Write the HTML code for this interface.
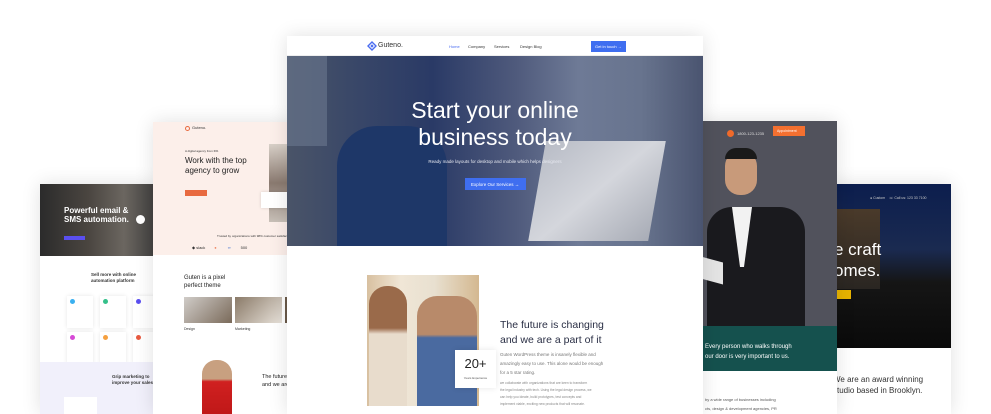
<!DOCTYPE html>
<html><head><meta charset="utf-8"><style>
*{margin:0;padding:0;box-sizing:border-box}
body{width:991px;height:414px;overflow:hidden;background:#fff;font-family:"Liberation Sans",sans-serif;position:relative}
.a{position:absolute}
.sh{box-shadow:0 0 18px rgba(0,0,0,.12)}
.t{position:absolute;white-space:nowrap}
</style></head><body>

<!-- far left card -->
<div class="a sh" style="left:40px;top:184px;width:120px;height:230px;background:#fff;overflow:hidden">
 <div class="a" style="left:0;top:0;width:120px;height:72px;background:linear-gradient(90deg,#2b2b2b,#4a4540 40%,#6b6660 70%,#3a3a3a)"></div>
 <div class="t" style="left:24px;top:22px;color:#fff;font-size:8px;font-weight:bold;line-height:9px">Powerful email &amp;<br>SMS automation.</div>
 <div class="a" style="left:24px;top:52px;width:21px;height:4px;background:#5a4ff0"></div>
 <div class="a" style="left:96px;top:31px;width:9px;height:9px;border-radius:50%;background:#fff"></div>
 <div class="t" style="left:51px;top:88px;color:#333;font-size:4.5px;font-weight:bold;line-height:6px">Sell more with online<br>automation platform</div>
 <div class="a" style="left:27px;top:112px;width:26px;height:32px;background:#fff;box-shadow:0 0 4px rgba(0,0,0,.1)"><div class="a" style="left:3px;top:3px;width:5px;height:5px;border-radius:50%;background:#3ab0f0"></div></div>
 <div class="a" style="left:60px;top:112px;width:26px;height:32px;background:#fff;box-shadow:0 0 4px rgba(0,0,0,.1)"><div class="a" style="left:3px;top:3px;width:5px;height:5px;border-radius:50%;background:#34c08a"></div></div>
 <div class="a" style="left:93px;top:112px;width:26px;height:32px;background:#fff;box-shadow:0 0 4px rgba(0,0,0,.1)"><div class="a" style="left:3px;top:3px;width:5px;height:5px;border-radius:50%;background:#5a4ff0"></div></div>
 <div class="a" style="left:27px;top:148px;width:26px;height:32px;background:#fff;box-shadow:0 0 4px rgba(0,0,0,.1)"><div class="a" style="left:3px;top:3px;width:5px;height:5px;border-radius:50%;background:#d64ad6"></div></div>
 <div class="a" style="left:60px;top:148px;width:26px;height:32px;background:#fff;box-shadow:0 0 4px rgba(0,0,0,.1)"><div class="a" style="left:3px;top:3px;width:5px;height:5px;border-radius:50%;background:#f5a040"></div></div>
 <div class="a" style="left:93px;top:148px;width:26px;height:32px;background:#fff;box-shadow:0 0 4px rgba(0,0,0,.1)"><div class="a" style="left:3px;top:3px;width:5px;height:5px;border-radius:50%;background:#e85a40"></div></div>
 <div class="a" style="left:0;top:178px;width:120px;height:52px;background:#f1f0fb"></div>
 <div class="t" style="left:72px;top:190px;color:#333;font-size:4.5px;font-weight:bold;line-height:6px">Grip marketing to<br>improve your sales.</div>
 <div class="a" style="left:24px;top:213px;width:33px;height:20px;background:#fff"></div>
</div>

<!-- second card -->
<div class="a sh" style="left:153px;top:122px;width:140px;height:292px;background:#fff;overflow:hidden">
 <div class="a" style="left:0;top:0;width:140px;height:133px;background:#fcefea"></div>
 <div class="a" style="left:32px;top:4px;width:5px;height:5px;border-radius:50%;border:1px solid #e86a40"></div>
 <div class="t" style="left:39px;top:3px;font-size:4px;color:#333">Guteno.</div>
 <div class="t" style="left:32px;top:27px;font-size:3px;color:#333">A digital agency from IPA</div>
 <div class="t" style="left:32px;top:34px;font-size:8px;color:#222;line-height:10px">Work with the top<br>agency to grow</div>
 <div class="a" style="left:32px;top:68px;width:22px;height:6px;background:#e86a40"></div>
 <div class="a" style="left:116px;top:22px;width:24px;height:78px;background:linear-gradient(#d8d0c8,#8a7a70 50%,#c8c0b8)"></div>
 <div class="a" style="left:108px;top:70px;width:32px;height:16px;background:#fff;box-shadow:0 0 3px rgba(0,0,0,.15)"></div>
 <div class="t" style="left:64px;top:112px;font-size:3px;color:#333">Trusted by organizations with 98% customer satisfaction</div>
 <div class="t" style="left:39px;top:123px;font-size:4px;color:#333">◆ slack &nbsp;&nbsp;&nbsp;&nbsp;&nbsp;&nbsp;&nbsp;<span style="color:#e86">●</span>&nbsp;&nbsp;&nbsp;&nbsp;&nbsp;&nbsp;&nbsp;&nbsp;&nbsp;&nbsp;<span style="color:#36c">∞</span>&nbsp;&nbsp;&nbsp;&nbsp;&nbsp;&nbsp;&nbsp;&nbsp; 500</div>
 <div class="t" style="left:31px;top:152px;font-size:6px;color:#222;line-height:8px">Guten is a pixel<br>perfect theme</div>
 <div class="a" style="left:31px;top:175px;width:48px;height:26px;background:linear-gradient(135deg,#d0ccc8,#7a6a5a)"></div>
 <div class="a" style="left:82px;top:175px;width:47px;height:26px;background:linear-gradient(135deg,#8a7a68,#e8e2da)"></div>
 <div class="a" style="left:132px;top:175px;width:8px;height:26px;background:#6a5a4a"></div>
 <div class="t" style="left:31px;top:205px;font-size:3.5px;color:#333">Design</div>
 <div class="t" style="left:82px;top:205px;font-size:3.5px;color:#333">Marketing</div>
 <div class="a" style="left:49px;top:238px;width:30px;height:54px;border-radius:14px 14px 0 0;background:linear-gradient(#c8a080 0,#c8a080 35%,#d02020 40%,#c01818)"></div>
 <div class="t" style="left:109px;top:251px;font-size:5.5px;color:#222;line-height:8px">The future<br>and we are</div>
</div>

<!-- right card 2 (house) -->
<div class="a sh" style="left:830px;top:184px;width:121px;height:230px;background:#fff;overflow:hidden">
 <div class="a" style="left:0;top:0;width:121px;height:164px;background:linear-gradient(180deg,#0c1e4e 0,#1a2a50 40%,#151515 60%,#0a0a0a)"></div>
 <div class="a" style="left:0;top:25px;width:50px;height:80px;background:linear-gradient(#4a3a2a,#2a2622)"></div>
 <div class="t" style="left:4px;top:55px;font-size:17px;color:#fff;line-height:21px">e craft<br>omes.</div>
 <div class="a" style="left:4px;top:106px;width:17px;height:9px;background:#e8b400"></div>
 <div class="t" style="left:40px;top:12px;font-size:3.5px;color:#ccc">● Custom &nbsp;&nbsp; ☏ Call us: 123 33 7100</div>
 <div class="t" style="left:3px;top:190px;font-size:8px;color:#333;line-height:11px">We are an award winning<br>studio based in Brooklyn.</div>
</div>

<!-- right card 1 (lawyer) -->
<div class="a sh" style="left:697px;top:121px;width:140px;height:293px;background:#fff;overflow:hidden">
 <div class="a" style="left:0;top:0;width:140px;height:205px;background:#51525c"></div>
 <div class="a" style="left:28px;top:30px;width:32px;height:44px;border-radius:15px;background:#c89a7a"></div>
 <div class="a" style="left:28px;top:27px;width:32px;height:11px;border-radius:15px 15px 0 0;background:#1a1a1a"></div>
 <div class="a" style="left:10px;top:86px;width:98px;height:119px;border-radius:25px 25px 0 0;background:#1a1a1e"></div>
 <div class="a" style="left:35px;top:86px;width:20px;height:60px;background:#f2f2f2;clip-path:polygon(0 0,100% 0,60% 100%,40% 100%)"></div>
 <div class="a" style="left:0;top:138px;width:26px;height:22px;background:#e4e4e4;transform:skewY(15deg)"></div>
 <div class="a" style="left:30px;top:9px;width:7px;height:7px;border-radius:50%;background:#f06a2a"></div>
 <div class="t" style="left:40px;top:10px;font-size:4px;color:#ddd">1800-123-1235</div>
 <div class="a" style="left:76px;top:5px;width:32px;height:10px;background:#f47030"></div>
 <div class="t" style="left:80px;top:8px;font-size:3.5px;color:#fff">Appointment</div>
 <div class="a" style="left:0;top:205px;width:140px;height:45px;background:#15514e"></div>
 <div class="t" style="left:8px;top:221px;font-size:6px;color:#fff;line-height:10px">Every person who walks through<br>our door is very important to us.</div>
 <div class="t" style="left:8px;top:274px;font-size:4px;color:#555;line-height:9px">by a wide range of businesses including<br>cts, design &amp; development agencies, PR</div>
</div>

<!-- center card -->
<div class="a sh" style="left:287px;top:36px;width:416px;height:378px;background:#fff;overflow:hidden">
 <div class="a" style="left:0;top:0;width:416px;height:20px;background:#fff;border-bottom:1px solid #eee"></div>
 <svg class="a" style="left:80px;top:5px" width="10" height="10" viewBox="0 0 10 10"><path d="M5 1L9 5 5 9 1 5Z" fill="none" stroke="#4a6cf0" stroke-width="1.4"/><path d="M5 3.3L6.7 5 5 6.7 3.3 5Z" fill="#4a6cf0"/></svg>
 <div class="t" style="left:91px;top:6px;font-size:7px;color:#333">Guteno.</div>
 <div class="t" style="left:162px;top:8px;font-size:4px;color:#4a6cf0">Home</div>
 <div class="t" style="left:181px;top:8px;font-size:4px;color:#333">Company</div>
 <div class="t" style="left:207px;top:8px;font-size:4px;color:#333">Services</div>
 <div class="t" style="left:233px;top:8px;font-size:4px;color:#333">Design Blog</div>
 <div class="a" style="left:304px;top:5px;width:35px;height:11px;background:#3f6ef0"></div>
 <div class="t" style="left:308px;top:8px;font-size:4px;color:#fff">Get in touch →</div>
 <div class="a" style="left:0;top:20px;width:416px;height:190px;background:linear-gradient(90deg,#4a5468 0,#3a4868 15%,#2a3a66 35%,#4f5a7c 55%,#6e7a96 70%,#68748e 85%,#4a5470)"></div>
 <div class="a" style="left:0;top:20px;width:40px;height:90px;background:#6a7890;opacity:.6"></div>
 <div class="a" style="left:50px;top:90px;width:110px;height:120px;border-radius:40px 40px 0 0;background:#1e3768"></div>
 <div class="a" style="left:250px;top:105px;width:120px;height:100px;background:linear-gradient(135deg,#b8bcc6,#d4d6dc 50%,#a8acb6);transform:skewX(-10deg)"></div>
 <div class="t" style="left:0;width:416px;text-align:center;top:61px;font-size:23px;color:#fff;line-height:27px">Start your online<br>business today</div>
 <div class="t" style="left:0;width:416px;text-align:center;top:123px;font-size:4.5px;color:#e6e8f0">Ready made layouts for desktop and mobile which helps designers</div>
 <div class="a" style="left:178px;top:142px;width:61px;height:12px;background:#3f6ef0"></div>
 <div class="t" style="left:184px;top:146px;font-size:4.5px;color:#fff">Explore Our Services →</div>
 <div class="a" style="left:80px;top:239px;width:112px;height:131px;background:linear-gradient(90deg,#d8c0a0 0,#f0e6d6 30%,#e8e0d0 60%,#d4b890)"></div>
 <div class="a" style="left:82px;top:250px;width:38px;height:120px;border-radius:18px 18px 0 0;background:linear-gradient(#9a6a4a 0,#9a6a4a 35%,#e8dccc 40%)"></div>
 <div class="a" style="left:130px;top:260px;width:60px;height:110px;border-radius:20px 20px 0 0;background:linear-gradient(#b88a6a 0,#b88a6a 35%,#4a6aa0 38%)"></div>
 <div class="a" style="left:168px;top:314px;width:41px;height:38px;background:#fff;box-shadow:0 0 6px rgba(0,0,0,.1)"></div>
 <div class="t" style="left:168px;width:41px;text-align:center;top:320px;font-size:13px;color:#222">20+</div>
 <div class="t" style="left:168px;width:41px;text-align:center;top:340px;font-size:3px;color:#555">Years Experience</div>
 <div class="t" style="left:213px;top:282px;font-size:10.5px;color:#2a2f45;line-height:15px">The future is changing<br>and we are a part of it</div>
 <div class="t" style="left:213px;top:314px;font-size:4.5px;color:#777;line-height:9px">Guten WordPress theme is insanely flexible and<br>amazingly easy to use. This alone would be enough<br>for a 5 star rating.</div>
 <div class="t" style="left:213px;top:344px;font-size:3.3px;color:#888;line-height:7px">we collaborate with organizations that are keen to transform<br>the legal industry with tech. Using the legal design process, we<br>can help you ideate, build prototypes, test concepts and<br>implement viable, exciting new products that will resonate.</div>
 <div class="a" style="left:213px;top:383px;width:41px;height:12px;background:#3f6ef0"></div>
 <div class="t" style="left:218px;top:387px;font-size:4px;color:#fff">Get Started →</div>
</div>
</body></html>
